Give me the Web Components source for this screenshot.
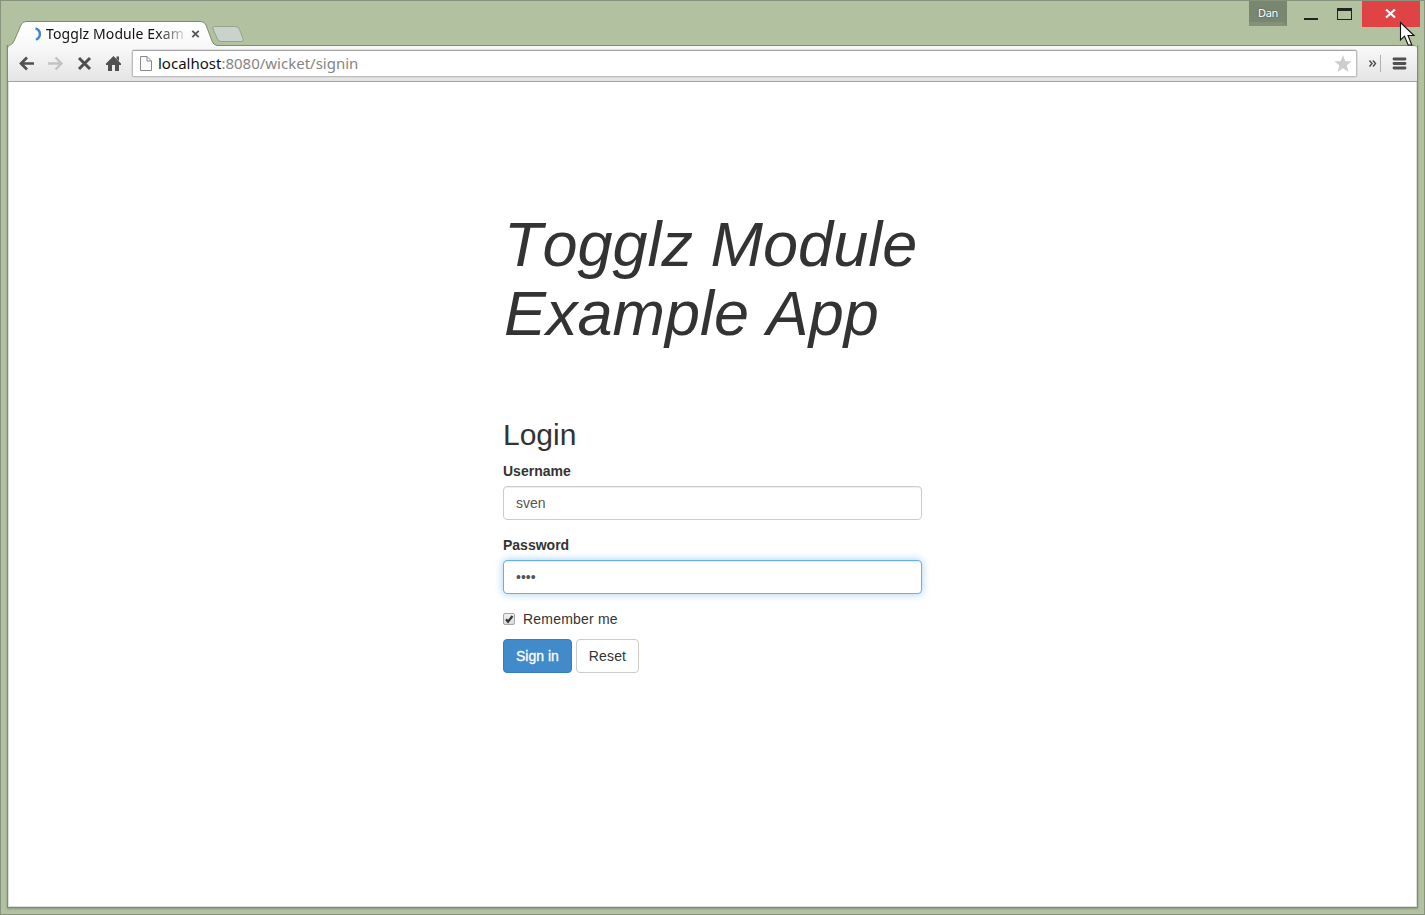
<!DOCTYPE html>
<html lang="en"><head><meta charset="utf-8"><title>Togglz Module Example App</title>
<style>html,body{margin:0;height:100%;overflow:hidden}</style></head>
<body>
<browser-window>
  <title-strip slot="title"><browser-tab slot="tab">Togglz Module Exam</browser-tab><span slot="user">Dan</span></title-strip>
  <tool-bar slot="tools"><span slot="host">localhost</span><span slot="path">:8080/wicket/signin</span></tool-bar>
  <login-page>
    <span slot="heading">Togglz Module Example App</span>
    <form-field label="Username" value="sven"></form-field>
    <form-field label="Password" value="••••" active></form-field>
    <check-option>Remember me</check-option>
    <button-row><push-button primary>Sign in</push-button><push-button>Reset</push-button></button-row>
  </login-page>
</browser-window>
<script>
const define = (name, html, init) => customElements.define(name, class extends HTMLElement {
  constructor() { super(); this.attachShadow({mode: 'open'}).innerHTML = '<style>*{box-sizing:border-box}</style>' + html; }
  connectedCallback() { if (init) init(this, this.shadowRoot); }
});

define('browser-window', `<style>
:host{display:flex;flex-direction:column;box-sizing:border-box;width:1425px;height:915px;background:#b2c1a0;border:1px solid #87937a;padding:0 7px 6px 7px}
.body{flex:1;display:flex;flex-direction:column;margin:0 0 1px;border:solid #dcdedb;border-width:0 1px 1px;background:#fff;box-shadow:0 0 0 1px #7e8a72,0 1px 2px 1px #8d997f;clip-path:inset(0 -4px -4px -4px)}
</style><slot name="title"></slot><div class="body"><slot name="tools"></slot><slot></slot></div>`);

define('title-strip', `<style>
:host{display:flex;height:44px;align-items:flex-start;position:relative;z-index:2}
.new{width:34px;height:18px;margin:24px 0 0 -8px}
.line{align-self:flex-end;flex:1;min-width:0}
.ctl{display:flex;height:26px;margin-right:-3px}
.user{width:38px;height:25px;background:#798770;border-bottom:4px solid #84917a;border-right:4px solid #798770;color:#fff;font:11px/24px "Noto Sans","Open Sans",sans-serif;letter-spacing:-.3px;padding-left:9px;text-shadow:0 0 2px #445}
.close{width:58px;height:26px;background:#e04343}
.close svg{display:block}
.cursor{position:absolute;left:1391px;top:20px;z-index:3}
</style><slot name="tab"></slot>
<svg class="new" viewBox="0 0 34 18"><path d="M3.5 1.5H24.5Q27.5 1.5 28.5 4.5L32 13.5Q33 16.5 30.5 16.5H10Q7.5 16.5 6.5 14L2 4Q1 1.5 3.5 1.5Z" fill="#c9d3cc" stroke="#96a389"/></svg>
<div class="line"></div>
<div class="ctl"><div class="user"><slot name="user"></slot></div>
<svg width="75" height="26"><path d="M17 18H31" stroke="#222" stroke-width="2"/><rect x="50.5" y="7.5" width="14" height="11" fill="none" stroke="#222"/><path d="M50 8.5H65" stroke="#222" stroke-width="3"/></svg>
<div class="close"><svg width="58" height="26"><path d="M24 8.5L33 16.5M33 8.5L24 16.5" stroke="#fff" stroke-width="2.2"/></svg></div></div>
<svg class="cursor" width="18" height="26"><path d="M1.5 1.5V19L5.5 15.2L9.2 24H12.8L9 14.5H15Z" fill="#fff" stroke="#111" stroke-width="1.1"/></svg>`);

define('browser-tab', `<style>
:host{display:grid;width:211px;height:44px;position:relative;z-index:2}
:host>*{grid-area:1/1}
.shape{margin-top:-1px}
.content{display:flex;margin-top:21px;height:23px;align-items:center;padding-left:26px}
.label{width:139px;margin-left:4px;overflow:hidden;white-space:nowrap;color:#111;font:14px/24px "Noto Sans","Open Sans",sans-serif;letter-spacing:.1px;-webkit-mask-image:linear-gradient(90deg,#000 80%,transparent 103%);mask-image:linear-gradient(90deg,#000 80%,transparent 103%)}
</style>
<svg class="shape" width="211" height="46" style="overflow:visible"><defs><linearGradient id="g" x2="0" y2="1"><stop stop-color="#fff"/><stop offset="1" stop-color="#f8f8f8"/></linearGradient></defs><path d="M0 48Q0 45 3 44.500Q5 43.500 6 41L13 25Q14.500 21.500 18 21.500H193Q196.500 21.500 198 25L204 41Q205.500 45 209 45.500V48Z" fill="url(#g)"/><path d="M-.5 48Q-.3 45.200 3 44.500Q5 43.500 6 41L13 25Q14.500 21.500 18 21.500H193Q196.500 21.500 198 25L204 41Q205.500 45 209 45.500" fill="none" stroke="#7e8a72"/></svg>
<div class="content"><svg width="8" height="16"><path d="M1.500 2.500C7 4 7.500 11 2 13.800" fill="none" stroke="#4683d2" stroke-width="2.400"/></svg><div class="label"><slot></slot></div>
<svg width="12" height="12" style="margin-left:3.500px"><path d="M3.300 2.800L9.700 9.200M9.700 2.800L3.300 9.200" stroke="#555" stroke-width="1.800"/></svg></div>`);

define('tool-bar', `<style>
:host{display:flex;box-sizing:border-box;height:37px;flex:none;border-top:1px solid #7e8a72;border-bottom:1px solid #a4a4a4;background:linear-gradient(#f9f9f9,#e4e4e4);border-radius:3px 3px 0 0;padding:4px 0 0 0;margin:0 -1px}
.icons{width:124px;height:30px;flex:none}
.url{display:flex;align-items:center;width:1225px;flex:none;height:27px;border:1px solid #bcbcbc;border-top-color:#a2a2a2;border-radius:2px;background:#fff;box-shadow:0 0 0 .5px #ccc;font:15px/25px "Noto Sans","Open Sans",sans-serif;color:#858585;white-space:nowrap;letter-spacing:0}
.url b{font-weight:400;color:#111}
.doc{margin:0 5px 0 6px}.star{margin-left:auto;margin-right:4px}
</style>
<svg class="icons" viewBox="8 50 124 30"><g fill="none" stroke="#505050" stroke-width="3"><path d="M21 63.500H34M27 57.500L21 63.500L27 69.500" stroke-width="2.700"/><path d="M48 63.500H61M55.500 57.500L61.500 63.500L55.500 69.500" stroke="#c3c3c3" stroke-width="2.400"/><path d="M79 58L90 69M90 58L79 69"/></g>
<path d="M113.500 56L121 63.500V65H119V71H115V65H112V71H108V65H106V63.500ZM116.500 56.500H119V61L116.500 58.500Z" fill="#505050"/></svg>
<div class="url"><svg class="doc" width="14" height="17"><path d="M1.500 1.500H8L12.500 6V15.500H1.500ZM8 1.500V6H12.500" fill="#fafafa" stroke="#8a8a8a"/></svg><b><slot name="host"></slot></b><slot name="path"></slot><svg class="star" width="18" height="18"><path d="M9 0L11.300 6.200H17.700L12.700 10.300L14.500 17L9 13.200L3.500 17L5.300 10.300L.3 6.200H6.700Z" fill="#cdcdcd"/></svg></div>
<svg width="60" height="28"><path d="M12.500 10.500L15 13.500L12.500 16.500M16 10.500L18.500 13.500L16 16.500" fill="none" stroke="#4a4a4a" stroke-width="1.400"/><path d="M23.500 5V22" stroke="#b0b0b0"/><path d="M37 9H48M37 13.500H48M37 18H48" stroke="#505050" stroke-width="2.800" stroke-linecap="round"/></svg>`);

define('login-page', `<style>
:host{display:block;flex:1;width:419px;margin-left:494px;padding-top:128px;box-sizing:border-box;font:14px/20px "Liberation Sans",Arial,sans-serif;color:#333}
h1{margin:0;padding-left:1px;font-size:63px;font-weight:400;font-style:italic;line-height:69px;font-kerning:none}
h2{margin:70px 0 10px;font-size:30px;font-weight:400;line-height:33px}
</style><h1><slot name="heading"></slot></h1><h2>Login</h2><slot></slot>`);

define('form-field', `<style>
:host{display:block;margin-bottom:15px}
label{display:block;font-weight:700;margin-bottom:5px}
.in{height:34px;padding:6px 12px;border:1px solid #ccc;border-radius:4px;color:#555;background:#fff;box-shadow:inset 0 1px 1px rgba(0,0,0,.075)}
:host([active]) .in{border-color:#66afe9;box-shadow:inset 0 1px 1px rgba(0,0,0,.075),0 0 8px rgba(102,175,233,.6)}
</style><label></label><div class="in"></div>`, (el, r) => {
  r.querySelector('label').textContent = el.getAttribute('label');
  r.querySelector('.in').textContent = el.getAttribute('value');
});

define('check-option', `<style>
:host{display:flex;align-items:center;height:20px;margin-bottom:10px;letter-spacing:.2px}
svg{margin-right:7px}
</style><svg width="13" height="13"><defs><linearGradient id="c" x2="0" y2="1"><stop stop-color="#f1f1f1"/><stop offset="1" stop-color="#dadada"/></linearGradient></defs><rect x=".5" y=".5" width="11" height="11" rx="1.500" fill="url(#c)" stroke="#a6a6a6"/><path d="M3 6.300L5 8.700L9.500 3" fill="none" stroke="#333" stroke-width="2.200"/></svg><slot></slot>`);

define('button-row', `<style>:host{display:flex;gap:4px}</style><slot></slot>`);
define('push-button', `<style>
:host{display:block}
button{display:block;height:34px;padding:0 12px;border:1px solid #ccc;border-radius:4px;background:#fff;color:#333;font:14px/20px "Liberation Sans",Arial,sans-serif;letter-spacing:.15px}
:host([primary]) button{background:#428bca;border-color:#357ebd;color:#fff;letter-spacing:0;-webkit-text-stroke:.3px #fff}
</style><button><slot></slot></button>`);
</script>
</body></html>
